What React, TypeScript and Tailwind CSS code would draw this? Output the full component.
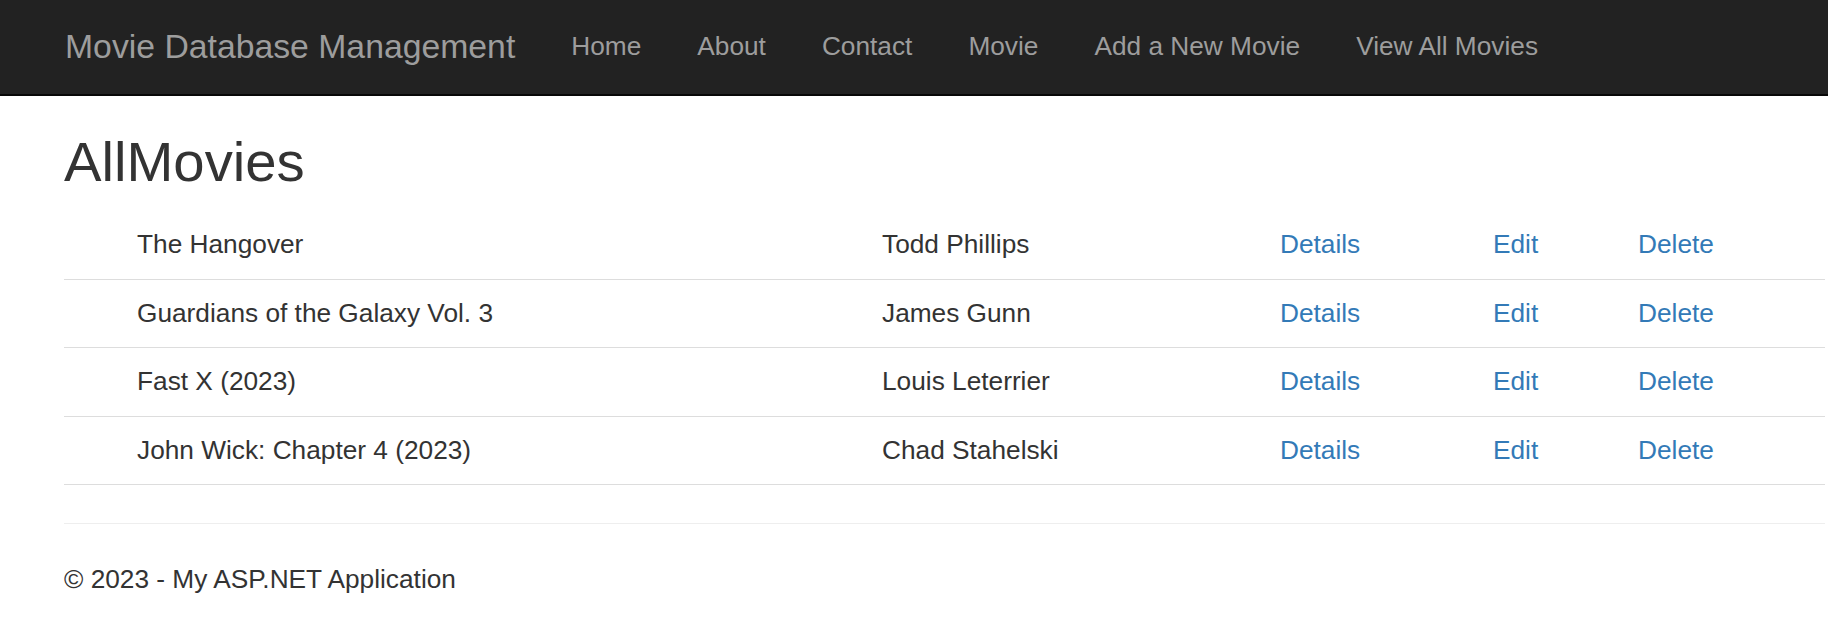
const movies = [
  { title: 'The Hangover', director: 'Todd Phillips' },
  { title: 'Guardians of the Galaxy Vol. 3', director: 'James Gunn' },
  { title: 'Fast X (2023)', director: 'Louis Leterrier' },
  { title: 'John Wick: Chapter 4 (2023)', director: 'Chad Stahelski' },
];

const navLinks = ['Home', 'About', 'Contact', 'Movie', 'Add a New Movie', 'View All Movies'];

export default function App() {
  return (
    <div className="min-h-screen bg-white font-['Liberation_Sans',Arial,sans-serif] text-[#333]">
      {/* navbar */}
      <nav className="h-[96px] bg-[#222] border-b-2 border-[#080808] pl-[37px] flex items-start">
        <a className="px-[28px] py-[28px] text-[33.75px] leading-[37.5px] text-[#9d9d9d] whitespace-nowrap">
          Movie Database Management
        </a>
        <ul className="flex">
          {navLinks.map((link) => (
            <li key={link}>
              <a className="block px-[28px] py-[28px] text-[26.25px] leading-[37.5px] text-[#9d9d9d] whitespace-nowrap">
                {link}
              </a>
            </li>
          ))}
        </ul>
      </nav>

      <div className="pl-[64px] pr-[3px]">
        <h2 className="mt-[34.5px] mb-[18.5px] text-[56.25px] leading-[62px] font-normal">AllMovies</h2>

        <div className="text-[26.25px] leading-[37.5px]">
          {movies.map((m) => (
            <div
              key={m.title}
              className="grid grid-cols-[58px_745px_398px_213px_145px_1fr] border-b border-[#ddd]"
            >
              <div className="p-[15px]"></div>
              <div className="p-[15px] whitespace-nowrap">{m.title}</div>
              <div className="p-[15px] whitespace-nowrap">{m.director}</div>
              <div className="p-[15px]">
                <a className="text-[#337ab7]">Details</a>
              </div>
              <div className="p-[15px]">
                <a className="text-[#337ab7]">Edit</a>
              </div>
              <div className="p-[15px]">
                <a className="text-[#337ab7]">Delete</a>
              </div>
            </div>
          ))}
        </div>

        <hr className="mt-[37.5px] mb-[37.5px] border-0 border-t border-[#eee]" />
        <footer>
          <p className="text-[26.25px] leading-[37.5px]">&copy; 2023 - My ASP.NET Application</p>
        </footer>
      </div>
    </div>
  );
}
